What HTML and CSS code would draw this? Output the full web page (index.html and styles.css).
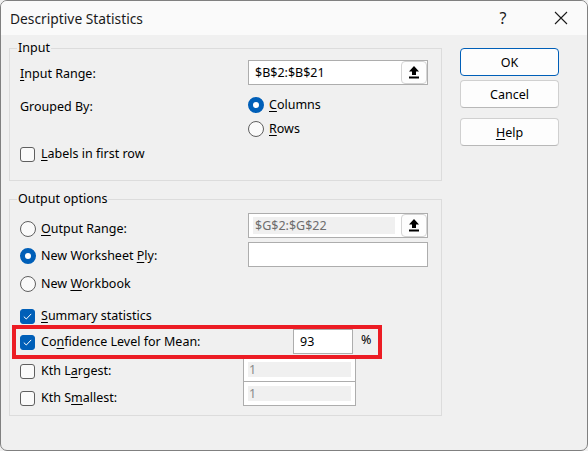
FILE: index.html
```html
<!DOCTYPE html>
<html lang="en">
<head>
    <meta charset="UTF-8">
    <title>Descriptive Statistics</title>
    <link rel="stylesheet" href="styles.css">
</head>
<body>
    <div class="dialog">
        <div class="titlebar">
            <span class="title">Descriptive Statistics</span>
            <span class="title-help">?</span>
            <span class="title-close">
                <svg width="14" height="14" viewBox="0 0 14 14"><path d="M1 1 L13 13 M13 1 L1 13" stroke="#1a1a1a" stroke-width="1.1" fill="none"/></svg>
            </span>
        </div>

        <div class="content">
            <div class="groups">
                <fieldset class="group group-input">
                    <legend>Input</legend>
                    <div class="row row-range">
                        <span class="lbl"><u>I</u>nput Range:</span>
                        <div class="refbox">
                            <span class="ref-text">$B$2:$B$21</span>
                            <span class="pick">
                                <svg width="12" height="13" viewBox="0 0 12 13"><path d="M6 0 L11 5.5 L8 5.5 L8 9 L4 9 L4 5.5 L1 5.5 Z" fill="#000"/><rect x="1" y="10.5" width="10" height="2" fill="#000"/></svg>
                            </span>
                        </div>
                    </div>
                    <div class="row row-grouped">
                        <span class="lbl lbl-grouped">Grouped By:</span>
                        <div class="radios">
                            <label class="opt opt-tall"><span class="radio on"></span><span><u>C</u>olumns</span></label>
                            <label class="opt opt-tall"><span class="radio"></span><span><u>R</u>ows</span></label>
                        </div>
                    </div>
                    <div class="row row-labels">
                        <label class="opt opt-tall"><span class="check"></span><span><u>L</u>abels in first row</span></label>
                    </div>
                </fieldset>

                <fieldset class="group group-output">
                    <legend>Output options</legend>
                    <div class="row row-out">
                        <label class="opt opt-col off-8"><span class="radio"></span><span><u>O</u>utput Range:</span></label>
                        <div class="refbox">
                            <span class="ref-text disabled">$G$2:$G$22</span>
                            <span class="pick">
                                <svg width="12" height="13" viewBox="0 0 12 13"><path d="M6 0 L11 5.5 L8 5.5 L8 9 L4 9 L4 5.5 L1 5.5 Z" fill="#000"/><rect x="1" y="10.5" width="10" height="2" fill="#000"/></svg>
                            </span>
                        </div>
                    </div>
                    <div class="row row-ply">
                        <label class="opt opt-col off-6"><span class="radio on"></span><span>New Worksheet <u>P</u>ly:</span></label>
                        <div class="refbox"></div>
                    </div>
                    <div class="row row-book">
                        <label class="opt"><span class="radio"></span><span>New <u>W</u>orkbook</span></label>
                    </div>
                    <div class="row row-summary">
                        <label class="opt"><span class="check on">
                            <svg width="9" height="7" viewBox="0 0 9 7"><path d="M0.8 3.6 L3.3 6 L8.2 0.9" stroke="#fff" stroke-width="1" fill="none"/></svg>
                        </span><span><u>S</u>ummary statistics</span></label>
                    </div>
                    <div class="row row-conf">
                        <label class="opt opt-conf off-5"><span class="check on">
                            <svg width="9" height="7" viewBox="0 0 9 7"><path d="M0.8 3.6 L3.3 6 L8.2 0.9" stroke="#fff" stroke-width="1" fill="none"/></svg>
                        </span><span>Co<u>n</u>fidence Level for Mean:</span></label>
                        <span class="numbox">93</span>
                        <span class="pct">%</span>
                        <span class="highlight"></span>
                    </div>
                    <div class="row row-kth">
                        <label class="opt opt-kth off-6"><span class="check"></span><span>Kth L<u>a</u>rgest:</span></label>
                        <div class="kbox"><span class="kval">1</span></div>
                    </div>
                    <div class="row row-kth2">
                        <label class="opt opt-kth off-9"><span class="check"></span><span>Kth S<u>m</u>allest:</span></label>
                        <div class="kbox"><span class="kval">1</span></div>
                    </div>
                </fieldset>
            </div>

            <div class="buttons">
                <button class="btn btn-default">OK</button>
                <button class="btn">Cancel</button>
                <button class="btn btn-help"><u>H</u>elp</button>
            </div>
        </div>
    </div>
</body>
</html>
```

FILE: styles.css
```css
html, body {
    margin: 0;
    padding: 0;
    background: #f0f0f0;
}
body {
    font-family: "Noto Sans", "Open Sans", sans-serif;
    font-size: 12.5px;
    color: #000;
}
u {
    text-underline-offset: 2px;
}
.dialog {
    width: 588px;
    height: 451px;
    box-sizing: border-box;
    border: 1px solid #808080;
    border-radius: 7px;
    background: #f0f0f0;
    overflow: hidden;
}

/* title bar */
.titlebar {
    height: 34px;
    background: #fafafa;
    display: flex;
    align-items: center;
    padding-left: 9px;
}
.title {
    font-size: 13.8px;
    flex: 1;
    color: #1a1a1a;
}
.title-help {
    font-size: 16px;
    width: 16px;
    text-align: center;
    margin-right: 43px;
    color: #1a1a1a;
}
.title-close {
    display: flex;
    margin-right: 19px;
}

/* body */
.content {
    display: flex;
    padding-left: 8px;
}
.groups {
    width: 433px;
    padding-top: 5px;
}
.group {
    margin: 0;
    border: 1px solid #dcdcdc;
    padding: 0 0 0 10px;
    min-width: 0;
}
.group legend {
    padding: 0 1px;
    margin-left: -3px;
    line-height: 16px;
    height: 16px;
}
.group-input {
    padding-top: 4px;
    padding-bottom: 14px;
}
.group-output {
    margin-top: 10px;
    padding-top: 6px;
    padding-bottom: 9px;
}

.row {
    display: flex;
    align-items: flex-start;
    position: relative;
}
.lbl {
    width: 228px;
    line-height: 16px;
}
.row-range {
    height: 25px;
    align-items: center;
}
.row-range .lbl {
    margin-top: 2px;
}
.row-grouped {
    margin-top: 8px;
}
.lbl-grouped {
    margin-top: 6px;
}
.radios {
    display: flex;
    flex-direction: column;
}
.row-labels {
    margin-top: 1px;
}

/* option (radio / checkbox + text) */
.opt {
    display: flex;
    align-items: center;
    height: 16px;
    line-height: 16px;
    white-space: nowrap;
}
.opt-tall {
    height: 24px;
}
.opt-col {
    width: 228px;
}
.opt-conf {
    width: 273px;
}
.opt-kth {
    width: 223px;
}
.off-5 { margin-top: 5px; }
.off-6 { margin-top: 6px; }
.off-8 { margin-top: 8px; }
.off-9 { margin-top: 9px; }

.radio {
    width: 16px;
    height: 16px;
    box-sizing: border-box;
    border: 1px solid #5f5f5f;
    border-radius: 50%;
    background: #fafafa;
    margin-right: 5px;
    flex: none;
}
.radio.on {
    border: 5px solid #005fb8;
    background: #fff;
}
.check {
    width: 15px;
    height: 15px;
    box-sizing: border-box;
    border: 1px solid #5f5f5f;
    border-radius: 3px;
    background: #fafafa;
    margin-right: 6px;
    flex: none;
    display: flex;
    align-items: center;
    justify-content: center;
}
.check.on {
    border-color: #005fb8;
    background: #005fb8;
}

/* edit boxes */
.refbox {
    width: 180px;
    height: 25px;
    box-sizing: border-box;
    border: 1px solid #adadad;
    background: #fff;
    display: flex;
    align-items: center;
    padding-left: 6px;
}
.ref-text {
    flex: 1;
    line-height: 17px;
}
.ref-text.disabled {
    background: #f0f0f0;
    color: #6d6d6d;
    margin-left: -2px;
    padding-left: 2px;
    margin-right: 6px;
}
.pick {
    width: 26px;
    height: 23px;
    box-sizing: border-box;
    border: 1px solid #d4d4d4;
    border-radius: 4px;
    background: #fdfdfd;
    display: flex;
    align-items: center;
    justify-content: center;
}
.row-out {
    height: 25px;
}
.row-ply {
    margin-top: 4px;
    height: 25px;
}
.row-book {
    margin-top: 9px;
}
.row-summary {
    margin-top: 16px;
}
.row-conf {
    margin-top: 5px;
    height: 25px;
}
.numbox {
    width: 60px;
    height: 25px;
    box-sizing: border-box;
    border: 1px solid #adadad;
    background: #fff;
    padding-left: 6px;
    line-height: 23px;
}
.pct {
    margin-left: 8px;
    line-height: 22px;
}
.highlight {
    position: absolute;
    top: -4px;
    left: -8px;
    width: 370px;
    height: 34px;
    box-sizing: border-box;
    border: 4px solid #ec1c24;
    z-index: 2;
}
.row-kth {
    margin-top: 3px;
}
.row-kth2 {
    margin-top: -1px;
}
.kbox {
    width: 113px;
    height: 25px;
    box-sizing: border-box;
    border: 1px solid #adadad;
    background: #fff;
    padding: 4px 4px;
    display: flex;
}
.kval {
    flex: 1;
    background: #f0f0f0;
    color: #8a8a8a;
    line-height: 15px;
    padding-left: 1px;
}

/* buttons */
.buttons {
    display: flex;
    flex-direction: column;
    margin-left: 18px;
    padding-top: 13px;
}
.btn {
    width: 99px;
    height: 28px;
    box-sizing: border-box;
    font: inherit;
    color: #000;
    background: #fdfdfd;
    border: 1px solid #d0d0d0;
    border-bottom-color: #b8b8b8;
    border-radius: 4px;
    margin-bottom: 4px;
    padding: 0;
}
.btn-default {
    border: 1px solid #005fb8;
}
.btn-help {
    margin-top: 6px;
}
```
